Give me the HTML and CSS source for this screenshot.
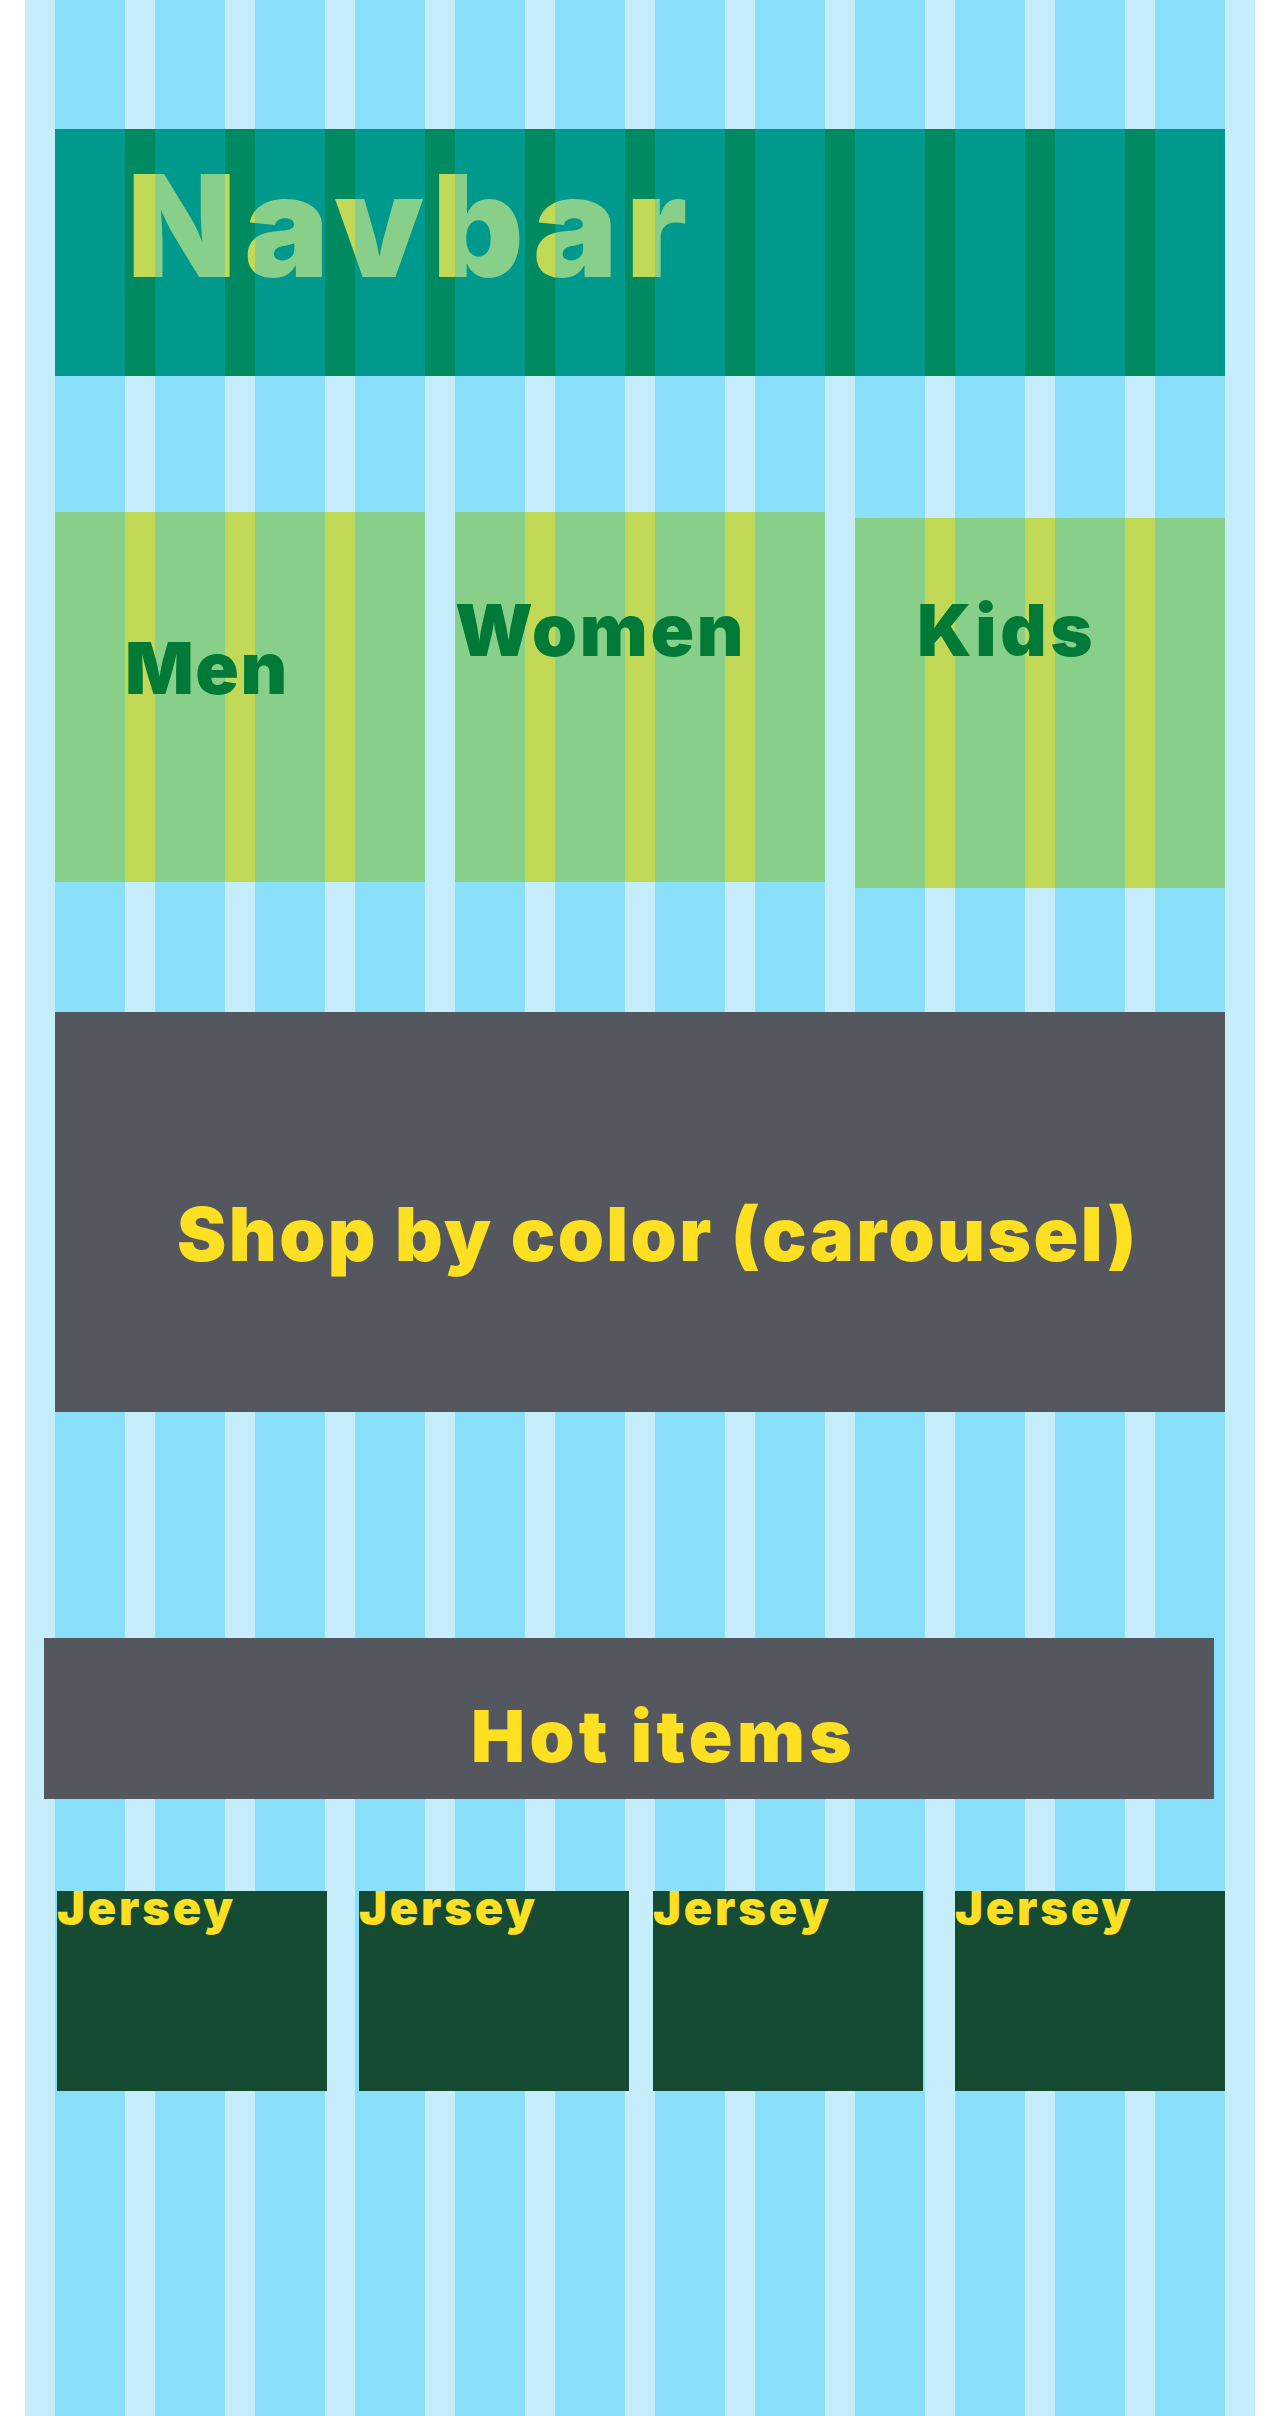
FILE: index.html
```html
<!DOCTYPE html>
<html lang="en">
<head>
<meta charset="utf-8">
<title>Grid layout</title>
<link rel="stylesheet" href="styles.css">
</head>
<body>
<div class="page">
  <header class="navbar">
    <h1 class="navbar-title">Navbar</h1>
  </header>

  <section class="categories">
    <div class="category category-men"><span class="category-label">Men</span></div>
    <div class="category category-women"><span class="category-label">Women</span></div>
    <div class="category category-kids"><span class="category-label">Kids</span></div>
  </section>

  <section class="carousel">
    <h2 class="carousel-title">Shop by color (carousel)</h2>
  </section>

  <section class="hot">
    <h2 class="hot-title">Hot items</h2>
  </section>

  <section class="items">
    <div class="item item-a"><span class="item-label">Jersey</span></div>
    <div class="item item-b"><span class="item-label">Jersey</span></div>
    <div class="item item-c"><span class="item-label">Jersey</span></div>
    <div class="item item-d"><span class="item-label">Jersey</span></div>
  </section>
</div>
</body>
</html>
```

FILE: styles.css
```css
html, body {
  margin: 0;
  padding: 0;
  background: #ffffff;
}

body {
  font-family: Inter, "Liberation Sans", Arial, sans-serif;
  font-weight: 900;
}

h1, h2 {
  margin: 0;
  font-weight: 900;
}

/* page grid: 12 columns of 70px with 30px gutters, 30px outer gutter */
.page {
  box-sizing: border-box;
  margin: 0 25px;
  padding: 129px 30px 0;
  min-height: 2416px;
  background-image: linear-gradient(to right, #c5eefa 0 30px, #8ae0f8 30px 100px);
  background-size: 100px 100%;
  background-repeat: repeat;
}

/* NAVBAR */
.navbar {
  height: 247px;
  background-image: linear-gradient(to right, #00998e 0 70px, #008a62 70px 100px);
  background-size: 100px 100%;
}

.navbar-title {
  padding: 25px 0 0 72px;
  font-size: 142px;
  line-height: 142px;
  letter-spacing: 8px;
  background-image: linear-gradient(to right, #88d08a 0 70px, #c1d957 70px 100px);
  background-size: 100px 100%;
  -webkit-background-clip: text;
  background-clip: text;
  color: transparent;
}

/* CATEGORIES */
.categories {
  display: flex;
  align-items: flex-start;
  gap: 30px;
  margin-top: 136px;
}

.category {
  box-sizing: border-box;
  width: 370px;
  height: 370px;
  background-image: linear-gradient(to right, #88d08a 0 70px, #c1d957 70px 100px);
  background-size: 100px 100%;
  color: #007a36;
  font-size: 72px;
  line-height: 72px;
  letter-spacing: 2.5px;
}

.category-label {
  display: block;
}

.category-men {
  padding: 120px 0 0 70px;
  letter-spacing: 1.5px;
}

.category-women {
  padding: 82px 0 0 0;
  letter-spacing: 2.7px;
}

.category-kids {
  margin-top: 6px;
  padding: 76px 0 0 62px;
  letter-spacing: 3.6px;
}

/* CAROUSEL */
.carousel {
  height: 400px;
  margin-top: 124px;
  background: #54575d;
}

.carousel-title {
  padding: 185px 0 0 122px;
  color: #fde021;
  font-size: 74px;
  line-height: 74px;
  letter-spacing: 2.4px;
}

/* HOT ITEMS */
.hot {
  width: 1170px;
  height: 161px;
  margin: 226px 0 0 -11px;
  background: #54575d;
}

.hot-title {
  padding: 62px 0 0 427px;
  color: #fde021;
  font-size: 72px;
  line-height: 72px;
  letter-spacing: 4.4px;
}

/* ITEMS */
.items {
  display: flex;
  margin: 92px 0 0 2px;
}

.item {
  width: 270px;
  height: 200px;
  background: #154a33;
}

.item-a { margin-right: 32px; }
.item-b { margin-right: 24px; }
.item-c { margin-right: 32px; }

.item-label {
  display: block;
  color: #fde021;
  font-size: 47px;
  line-height: 34px;
  letter-spacing: 2.8px;
}
```
